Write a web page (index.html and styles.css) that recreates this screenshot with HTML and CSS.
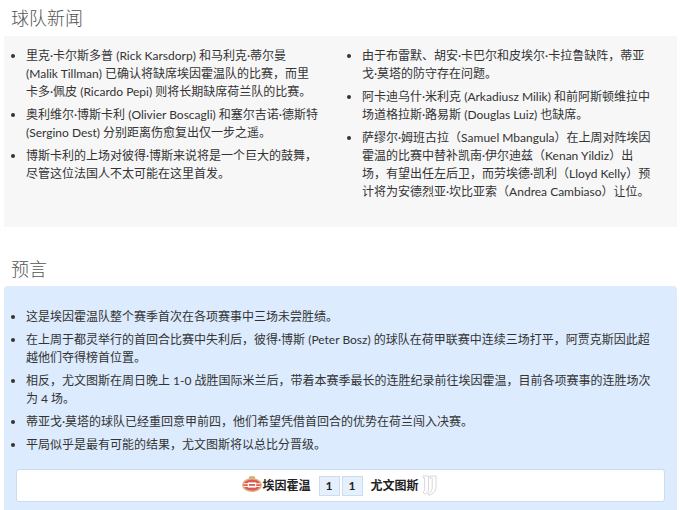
FILE: index.html
```html
<!DOCTYPE html>
<html lang="zh">
<head>
<meta charset="utf-8">
<title>球队新闻</title>
<link rel="stylesheet" href="styles.css">
</head>
<body>
<h2 class="heading">球队新闻</h2>
<section class="news">
  <ul class="list">
    <li>里克·卡尔斯多普 (Rick Karsdorp) 和马利克·蒂尔曼 (Malik Tillman) 已确认将缺席埃因霍温队的比赛，而里卡多·佩皮 (Ricardo Pepi) 则将长期缺席荷兰队的比赛。</li>
    <li>奥利维尔·博斯卡利 (Olivier Boscagli) 和塞尔吉诺·德斯特 (Sergino Dest) 分别距离伤愈复出仅一步之遥。</li>
    <li>博斯卡利的上场对彼得·博斯来说将是一个巨大的鼓舞，尽管这位法国人不太可能在这里首发。</li>
  </ul>
  <ul class="list">
    <li>由于布雷默、胡安·卡巴尔和皮埃尔·卡拉鲁缺阵，蒂亚戈·莫塔的防守存在问题。</li>
    <li>阿卡迪乌什·米利克 (Arkadiusz Milik) 和前阿斯顿维拉中场道格拉斯·路易斯 (Douglas Luiz) 也缺席。</li>
    <li>萨缪尔·姆班古拉（Samuel Mbangula）在上周对阵埃因霍温的比赛中替补凯南·伊尔迪兹（Kenan Yildiz）出场，有望出任左后卫，而劳埃德·凯利（Lloyd Kelly）预计将为安德烈亚·坎比亚索（Andrea Cambiaso）让位。</li>
  </ul>
</section>
<h2 class="heading heading-second">预言</h2>
<section class="prediction">
  <ul class="list list-wide">
    <li>这是埃因霍温队整个赛季首次在各项赛事中三场未尝胜绩。</li>
    <li>在上周于都灵举行的首回合比赛中失利后，彼得·博斯 (Peter Bosz) 的球队在荷甲联赛中连续三场打平，阿贾克斯因此超越他们夺得榜首位置。</li>
    <li>相反，尤文图斯在周日晚上 1-0 战胜国际米兰后，带着本赛季最长的连胜纪录前往埃因霍温，目前各项赛事的连胜场次为 4 场。</li>
    <li>蒂亚戈·莫塔的球队已经重回意甲前四，他们希望凭借首回合的优势在荷兰闯入决赛。</li>
    <li>平局似乎是最有可能的结果，尤文图斯将以总比分晋级。</li>
  </ul>
  <div class="score">
    <svg class="crest" width="20" height="18" viewBox="0 0 20 18" aria-hidden="true">
      <path d="M6.5 4 7.5 1.2H12.5L13.5 4Z" fill="#cfa878"/>
      <ellipse cx="10" cy="10" rx="10" ry="7" fill="#dcb98a"/>
      <ellipse cx="10" cy="10" rx="8.4" ry="5.6" fill="#e4574c"/>
      <path d="M2 8.2H18V9.2H2ZM2 11H18V12H2Z" fill="#fff"/>
      <rect x="5.8" y="7.4" width="8.4" height="5.2" fill="#fff"/>
      <rect x="7" y="9" width="6" height="1.8" fill="#c9605a"/>
    </svg>
    <b class="team">埃因霍温</b>
    <span class="goals">
      <span class="goal">1</span>
      <span class="goal">1</span>
    </span>
    <b class="team team-away">尤文图斯</b>
    <svg class="crest-j" width="15" height="21" viewBox="0 0 15 21" aria-hidden="true">
      <path d="M1 1H6.5V14C6.5 16.5 5 18 2.5 19L1 17C2.2 16.5 2.7 15.5 2.7 14V3H1Z" fill="#fff" stroke="#d2d2d2" stroke-width=".9"/>
      <path d="M8 1H14V12.5C14 16 11.5 18.5 7 20.3L5.8 18.8C9 17.4 10.2 15.5 10.2 12.5V3H8Z" fill="#fff" stroke="#d2d2d2" stroke-width=".9"/>
    </svg>
  </div>
</section>
</body>
</html>
```
FILE: styles.css
```css
html, body {
  margin: 0;
  padding: 0;
  background: #fff;
  overflow: hidden;
}
body {
  height: 510px;
  padding: 0 4px;
  font: 12px/18px Lato, "Noto Sans CJK SC", sans-serif;
  color: #333;
}
.heading {
  margin: 0;
  padding: 6px 7px 0;
  height: 36px;
  box-sizing: border-box;
  font-size: 18px;
  line-height: 24px;
  font-weight: 300;
  color: #555;
}
.heading-second {
  margin-top: 24px;
  height: 35px;
}
.news {
  display: grid;
  grid-template-columns: 303px 303px;
  column-gap: 33px;
  height: 191px;
  box-sizing: border-box;
  padding: 11px 12px 0;
  background: #f7f7f7;
}
.list {
  margin: 0;
  padding: 0 0 0 10px;
}
.list-wide {
  padding-right: 8px;
}
.list li {
  margin-bottom: 5px;
}
.prediction {
  height: 224px;
  box-sizing: border-box;
  padding: 22px 12px 0;
  background: #dcebfd;
  border-radius: 4px 4px 0 0;
}
.score {
  display: flex;
  align-items: center;
  justify-content: center;
  height: 33px;
  margin-top: 15px;
  box-sizing: border-box;
  background: #fff;
  border: 1px solid #c8dcf2;
  border-radius: 3px;
}
.team {
  font-weight: 700;
  color: #222;
}
.team-away {
  margin-left: 8px;
}
.goals {
  display: flex;
  gap: 2px;
  margin-left: 8px;
}
.goal {
  width: 21px;
  height: 20px;
  box-sizing: border-box;
  border: 1px solid #c8dcf2;
  background: #e6f0fc;
  text-align: center;
  font-weight: 700;
  line-height: 18px;
  color: #222;
}
.crest { flex: none; margin-top: -3px; }
.crest-j { flex: none; margin: 0 2px 0 3px; }
```
